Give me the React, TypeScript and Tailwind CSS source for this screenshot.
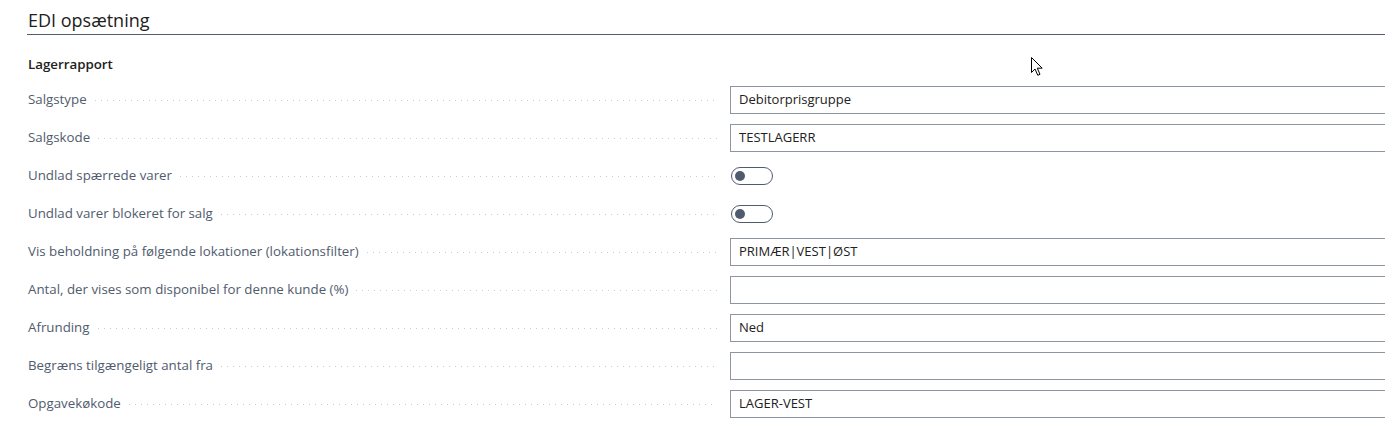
import React from "react";

type Row =
  | { label: string; kind: "text"; value: string }
  | { label: string; kind: "toggle"; on: boolean };

const rows: Row[] = [
  { label: "Salgstype", kind: "text", value: "Debitorprisgruppe" },
  { label: "Salgskode", kind: "text", value: "TESTLAGERR" },
  { label: "Undlad spærrede varer", kind: "toggle", on: false },
  { label: "Undlad varer blokeret for salg", kind: "toggle", on: false },
  { label: "Vis beholdning på følgende lokationer (lokationsfilter)", kind: "text", value: "PRIMÆR|VEST|ØST" },
  { label: "Antal, der vises som disponibel for denne kunde (%)", kind: "text", value: "" },
  { label: "Afrunding", kind: "text", value: "Ned" },
  { label: "Begræns tilgængeligt antal fra", kind: "text", value: "" },
  { label: "Opgavekøkode", kind: "text", value: "LAGER-VEST" },
];

function Toggle({ on }: { on: boolean }) {
  return (
    <div className="ml-[1px] flex h-[18px] w-[42px] items-center rounded-full border border-[#505c6d] bg-white">
      <div className={`h-[10px] w-[10px] rounded-full bg-[#505c6d] ${on ? "ml-[27px]" : "ml-[3px]"}`} />
    </div>
  );
}

function Field({ row }: { row: Row }) {
  return (
    <div className="flex h-[38px] items-center">
      <div className="flex w-[702px] items-center pr-[13px]">
        <span className="whitespace-nowrap text-[13.3px] text-[#505c6d]">{row.label}</span>
        <span className="ml-[8px] mt-[1px] h-[1px] flex-1 bg-[linear-gradient(to_right,#c8cbd0_1px,transparent_1px)] bg-[length:6px_1px] bg-repeat-x" />
      </div>
      {row.kind === "text" ? (
        <div className="-mr-[20px] flex h-[28px] flex-1 items-center border border-[#8d95a1] pl-[8px] text-[13px] text-[#212121]">
          {row.value}
        </div>
      ) : (
        <Toggle on={row.on} />
      )}
    </div>
  );
}

function Pointer() {
  return (
    <svg className="absolute left-[1030px] top-[56px]" width="14" height="21" viewBox="0 0 14 21">
      <path
        d="M1.5 1.5 L1.5 16.5 L5 13 L7.8 19.3 L10 18.3 L7.3 12.2 L12.2 12.2 Z"
        fill="#ffffff"
        stroke="#000000"
        strokeWidth="1"
        strokeLinejoin="miter"
      />
    </svg>
  );
}

export default function App() {
  return (
    <div
      className="relative h-[443px] w-full overflow-hidden bg-white text-[13px]"
      style={{ fontFamily: '"Open Sans", "Noto Sans", Arial, sans-serif' }}
    >
      <div className="pl-[27px]">
        <div className="flex h-[35px] items-end border-b border-[#505c6d] pb-[2px]">
          <h2 className="pl-[1px] text-[18px] leading-[24px] text-[#212121]">EDI opsætning</h2>
        </div>
        <div className="pl-[1px]">
          <div className="flex h-[40px] items-end text-[13.3px] font-semibold text-[#212121]">Lagerrapport</div>
          <div className="pt-[6px]">
            {rows.map((r) => (
              <Field key={r.label} row={r} />
            ))}
          </div>
        </div>
      </div>
      <Pointer />
    </div>
  );
}
